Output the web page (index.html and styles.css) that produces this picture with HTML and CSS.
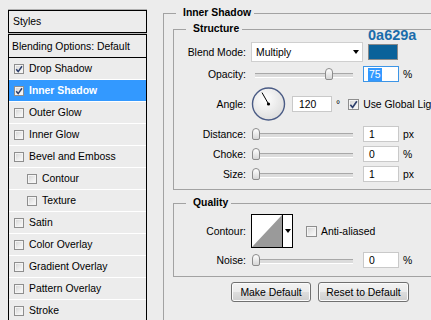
FILE: index.html
```html
<!DOCTYPE html>
<html>
<head>
<meta charset="utf-8">
<title>Layer Style - Inner Shadow</title>
<link rel="stylesheet" href="styles.css">
</head>
<body>
<div class="dialog">
  <div class="styles-panel">
    <div class="styles-head">Styles</div>
    <div class="styles-gap"></div>
    <ul class="styles-list">
      <li class="style-row blending">Blending Options: Default</li>
      <li class="style-row"><span class="cb checked"><svg viewBox="0 0 8 8"><path d="M1.2 4.2 L3.2 6.6 L7 1.2"/></svg></span><span>Drop Shadow</span></li>
      <li class="style-row active"><span class="cb checked"><svg viewBox="0 0 8 8"><path d="M1.2 4.2 L3.2 6.6 L7 1.2"/></svg></span><span>Inner Shadow</span></li>
      <li class="style-row"><span class="cb"></span><span>Outer Glow</span></li>
      <li class="style-row"><span class="cb"></span><span>Inner Glow</span></li>
      <li class="style-row"><span class="cb"></span><span>Bevel and Emboss</span></li>
      <li class="style-row sub"><span class="cb"></span><span>Contour</span></li>
      <li class="style-row sub"><span class="cb"></span><span>Texture</span></li>
      <li class="style-row"><span class="cb"></span><span>Satin</span></li>
      <li class="style-row"><span class="cb"></span><span>Color Overlay</span></li>
      <li class="style-row"><span class="cb"></span><span>Gradient Overlay</span></li>
      <li class="style-row"><span class="cb"></span><span>Pattern Overlay</span></li>
      <li class="style-row"><span class="cb"></span><span>Stroke</span></li>
    </ul>
  </div>

  <div class="options">
    <fieldset class="group outer">
      <legend>Inner Shadow</legend>

      <fieldset class="group structure">
        <legend>Structure</legend>

        <div class="row r-blend">
          <span class="lbl">Blend Mode:</span>
          <div class="select"><span>Multiply</span><span class="arrow"></span></div>
          <span class="swatch"></span>
        </div>

        <div class="row r-slider r-opacity">
          <span class="lbl">Opacity:</span>
          <div class="slider"><span class="thumb" style="left:77px"></span></div>
          <div class="num focus"><span class="sel">75</span></div>
          <span class="unit">%</span>
        </div>

        <div class="row r-angle">
          <span class="lbl">Angle:</span>
          <svg class="dial" viewBox="0 0 35 34" width="35" height="34">
            <defs>
              <radialGradient id="dialfill" cx="40%" cy="35%" r="70%">
                <stop offset="0" stop-color="#ffffff"/>
                <stop offset="1" stop-color="#dcdcdc"/>
              </radialGradient>
            </defs>
            <circle cx="17.5" cy="17" r="16" fill="url(#dialfill)" stroke="#4a5b85" stroke-width="1.4"/>
            <line x1="17.5" y1="17" x2="11" y2="5.6" stroke="#000" stroke-width="1"/>
            <circle cx="17.5" cy="17" r="1.6" fill="#000"/>
          </svg>
          <div class="num angle"><span>120</span></div>
          <span class="deg">°</span>
          <span class="cb checked big"><svg viewBox="0 0 8 8"><path d="M1.2 4.2 L3.2 6.6 L7 1.2"/></svg></span>
          <span class="cb-text">Use Global Light</span>
        </div>

        <div class="row r-slider r-distance">
          <span class="lbl">Distance:</span>
          <div class="slider"><span class="thumb" style="left:4px"></span></div>
          <div class="num"><span>1</span></div>
          <span class="unit">px</span>
        </div>

        <div class="row r-slider">
          <span class="lbl">Choke:</span>
          <div class="slider"><span class="thumb" style="left:4px"></span></div>
          <div class="num"><span>0</span></div>
          <span class="unit">%</span>
        </div>

        <div class="row r-slider">
          <span class="lbl">Size:</span>
          <div class="slider"><span class="thumb" style="left:4px"></span></div>
          <div class="num"><span>1</span></div>
          <span class="unit">px</span>
        </div>
      </fieldset>

      <fieldset class="group quality">
        <legend>Quality</legend>

        <div class="row r-contour">
          <span class="lbl">Contour:</span>
          <div class="picker">
            <svg class="curve" viewBox="0 0 30 32" width="30" height="32" preserveAspectRatio="none">
              <rect x="0" y="0" width="30" height="32" fill="#ffffff"/>
              <polygon points="0,32 30,0 30,32" fill="#9a9a9a"/>
            </svg>
            <div class="drop"><span class="arrow"></span></div>
          </div>
          <span class="cb big anti"></span>
          <span class="cb-text">Anti-aliased</span>
        </div>

        <div class="row r-slider r-noise">
          <span class="lbl">Noise:</span>
          <div class="slider"><span class="thumb" style="left:4px"></span></div>
          <div class="num"><span>0</span></div>
          <span class="unit">%</span>
        </div>
      </fieldset>

      <div class="buttons">
        <button class="btn btn-make">Make Default</button>
        <button class="btn btn-reset">Reset to Default</button>
      </div>
    </fieldset>

    <div class="hex">0a629a</div>
  </div>
</div>
</body>
</html>
```

FILE: styles.css
```css
* { box-sizing: border-box; }

html, body {
  margin: 0;
  padding: 0;
}

body {
  width: 431px;
  height: 320px;
  overflow: hidden;
  background: #ececec;
  font-family: "Liberation Sans", Arial, sans-serif;
  font-size: 10.4px;
  line-height: 13px;
  color: #000;
}

.dialog {
  display: flex;
  align-items: flex-start;
}

/* ---------- left styles list ---------- */
.styles-panel {
  flex: none;
  width: 139px;
  margin: 10px 0 0 8px;
  box-shadow: 0 -1px 0 #b0b0b0;
}

.styles-head {
  height: 23px;
  border: 1px solid #000;
  padding-left: 4px;
  display: flex;
  align-items: center;
}

.styles-gap {
  height: 1px;
  background: #b8b8b8;
}

.styles-list {
  list-style: none;
  margin: 0;
  padding: 0;
  border: 1px solid #000;
  border-bottom: none;
}

.style-row {
  height: 22px;
  border-bottom: 1px solid #ffffff;
  display: flex;
  align-items: center;
  padding-left: 5px;
  gap: 5px;
  white-space: nowrap;
}

.style-row.blending {
  height: 23px;
  padding-left: 3px;
  border-bottom: 1px solid #000;
}

.style-row.sub {
  padding-left: 18px;
}

.style-row.active {
  background: #3399ff;
  color: #fff;
  font-weight: bold;
}

/* checkbox */
.cb {
  flex: none;
  position: relative;
  width: 10px;
  height: 10px;
  border: 1px solid #8e8e8e;
  background: linear-gradient(135deg, #d2d2d2 0%, #eeeeee 60%, #fbfbfb 100%);
  box-shadow: inset 0 0 0 1px #f4f4f4;
}

.cb.big {
  width: 11px;
  height: 11px;
}

.cb svg {
  position: absolute;
  left: 0;
  top: 0;
  width: 100%;
  height: 100%;
}

.cb svg path {
  fill: none;
  stroke: #2d3f6c;
  stroke-width: 1.5;
}

/* ---------- right options ---------- */
.options {
  position: relative;
  flex: none;
  width: 340px;
  margin: 6px 0 0 16px;
}

.group {
  margin: 0;
  padding: 0;
  min-width: 0;
  border: 1px solid #a2a2a2;
}

.group > legend {
  margin-left: 12px;
  padding: 0 3px 0 7px;
  font-weight: bold;
  line-height: 14px;
}

.outer {
  min-height: 330px;
}

.structure {
  margin: 2px 0 0 9px;
  padding-bottom: 7px;
}

.quality {
  margin: 6px 0 0 9px;
  padding-bottom: 8px;
}

.row {
  display: flex;
  align-items: center;
  white-space: nowrap;
}

.lbl {
  flex: none;
  width: 72px;
  margin-right: 5px;
  text-align: right;
}

.r-blend { margin-top: 6px; height: 20px; }
.r-opacity { margin-top: 4px; }
.r-angle { margin-top: 5px; height: 34px; }
.r-slider { height: 16px; margin-top: 4px; }
.r-distance { margin-top: 5px; }
.r-contour { margin-top: 4px; height: 34px; }
.r-noise { margin-top: 4px; }

.select {
  flex: none;
  width: 112px;
  height: 20px;
  background: #fff;
  border: 1px solid #cfcfcf;
  display: flex;
  align-items: center;
  justify-content: space-between;
  padding: 0 3px 0 4px;
}

.arrow {
  width: 0;
  height: 0;
  border-left: 3.5px solid transparent;
  border-right: 3.5px solid transparent;
  border-top: 4px solid #000;
}

.swatch {
  flex: none;
  width: 30px;
  height: 16px;
  margin-left: 5px;
  background: #0a629a;
  border: 1px solid #8a8a8a;
}

.slider {
  flex: none;
  position: relative;
  width: 101px;
  height: 16px;
  margin-left: 1px;
}

.slider::before {
  content: "";
  position: absolute;
  left: 3px;
  right: 0;
  top: 7px;
  height: 3px;
  border-top: 1px solid #a8a8a8;
  border-bottom: 1px solid #ffffff;
  background: #dcdcdc;
}

.thumb {
  position: absolute;
  top: 2px;
  width: 8px;
  height: 12px;
  margin-left: -4px;
  border: 1px solid #8c8c8c;
  border-radius: 4px 4px 2px 2px;
  background: linear-gradient(#ffffff, #d6d6d6);
}

.num {
  flex: none;
  width: 36px;
  height: 16px;
  margin-left: 10px;
  background: #fff;
  border: 1px solid #c9c9c9;
  padding-left: 5px;
  display: flex;
  align-items: center;
}

.num.focus {
  border-color: #3d95e6;
  padding-left: 4px;
}

.sel {
  background: #3399ff;
  color: #fff;
  padding: 0 1px;
}

.num.angle {
  width: 40px;
  margin-left: 6px;
  padding-left: 6px;
}

.unit {
  margin-left: 4px;
}

.dial {
  flex: none;
  display: block;
}

.deg {
  margin-left: 4px;
}

.r-angle .cb {
  margin-left: 8px;
}

.cb-text {
  margin-left: 4px;
}

.picker {
  flex: none;
  width: 42px;
  height: 34px;
  border: 1px solid #000;
  background: #fff;
  display: flex;
}

.picker .curve {
  display: block;
  flex: none;
}

.picker .drop {
  flex: 1;
  border-left: 1px solid #000;
  display: flex;
  align-items: center;
  justify-content: center;
}

.cb.anti {
  margin-left: 13px;
}

.buttons {
  display: flex;
  gap: 7px;
  margin: 5px 0 0 67px;
}

.btn {
  height: 20px;
  padding: 0;
  font: inherit;
  color: #000;
  border: 1px solid #707070;
  border-radius: 3px;
  background: linear-gradient(#f3f3f3 0%, #ebebeb 50%, #dddddd 51%, #cfcfcf 100%);
  box-shadow: inset 0 0 0 1px #fbfbfb;
}

.btn-make { width: 80px; }
.btn-reset { width: 91px; }

.hex {
  position: absolute;
  left: 205px;
  top: 21px;
  font-weight: bold;
  font-size: 14.5px;
  line-height: 16px;
  color: #1b6cab;
}
```
